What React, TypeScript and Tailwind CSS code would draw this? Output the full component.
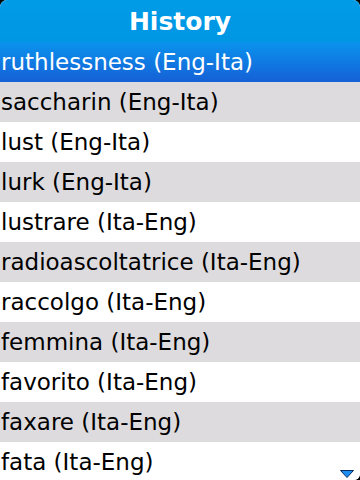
import React from "react";

const items = [
  "saccharin (Eng-Ita)",
  "lust (Eng-Ita)",
  "lurk (Eng-Ita)",
  "lustrare (Ita-Eng)",
  "radioascoltatrice (Ita-Eng)",
  "raccolgo (Ita-Eng)",
  "femmina (Ita-Eng)",
  "favorito (Ita-Eng)",
  "faxare (Ita-Eng)",
  "fata (Ita-Eng)",
];

export default function App() {
  return (
    <div className="w-[360px] h-[480px] bg-black overflow-hidden relative" style={{ fontFamily: '"DejaVu Sans", sans-serif' }}>
      <div className="w-full h-full bg-white rounded-t-[7px] rounded-br-[6px] overflow-hidden flex flex-col">
        <div className="h-[42px] shrink-0 bg-gradient-to-b from-[#009be6] to-[#0096e4] flex items-center justify-center text-white font-bold text-[25px] leading-none">
          History
        </div>
        <div className="h-[40px] shrink-0 bg-gradient-to-b from-[#0a93ee] to-[#1660d6] flex items-center pl-[1px] text-white text-[23px] leading-none">
          ruthlessness (Eng-Ita)
        </div>
        {items.map((t, i) => (
          <div
            key={t}
            className={`h-[40px] shrink-0 flex items-center pl-[1px] text-black text-[23px] leading-none ${i % 2 === 0 ? "bg-[#dddbde]" : "bg-white"}`}
          >
            {t}
          </div>
        ))}
      </div>
      <svg className="absolute left-[340px] top-[470px]" width="14" height="8" viewBox="0 0 14 8">
        <path d="M0.5 0.5 H13.5 L7 7.5 Z" fill="#1a8ef0" stroke="#0a2a60" strokeWidth="1" />
      </svg>
    </div>
  );
}
